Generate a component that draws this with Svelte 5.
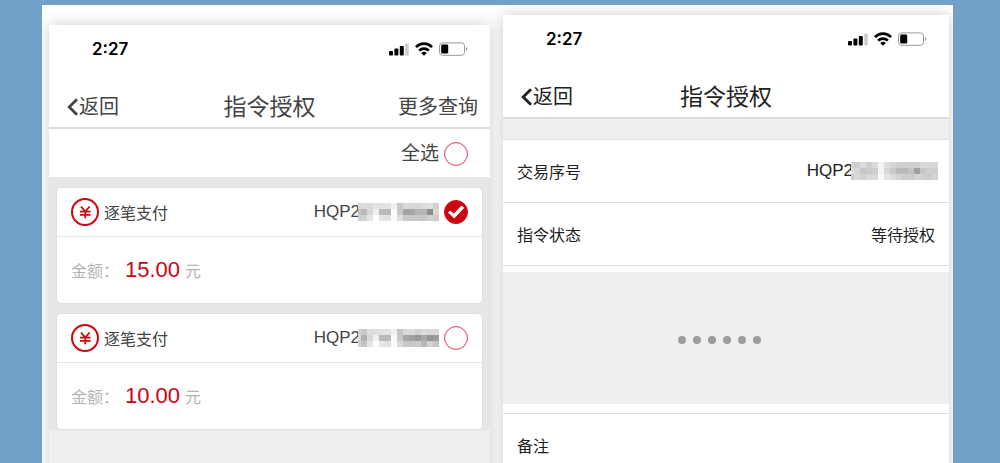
<script lang="ts">
	/** A payment waiting for authorisation */
	interface Payment {
		id: number;
		type: string;
		prefix: string;
		amount: string;
		checked: boolean;
		mask: string[];
	}

	/** Masks are rows of hex grey levels, one pair for each cell */
	let payments: Payment[] = $state([
		{
			id: 1,
			type: '逐笔支付',
			prefix: 'HQP2',
			amount: '15.00',
			checked: true,
			mask: [
				'd6dcd9e2e0e2f0c9d8d8d5dce0d0',
				'c5b8d8f0b9b9fcc8a3a5b5b58cd8',
				'ccd0e5ffe5e0fbddc8c8c8c5d0cc'
			]
		},
		{
			id: 2,
			type: '逐笔支付',
			prefix: 'HQP2',
			amount: '10.00',
			checked: false,
			mask: [
				'd0c8dcdee0e4f0c4dadad0dcd8d8',
				'd8b0d8efbabafbc8a8a299a8969b',
				'd2c5e6ffe6e2fcdacac6ccb8d0c6'
			]
		}
	]);

	const detailMask = [
		'd4cddbcfd9f3dfd6cecfcfcfd9d9d8',
		'ded6c7cbcdf3d8cab9b9c2a0c6cdcd',
		'cbd8cfd9d9f8e4dcd2cbccd4d0cbd4'
	];

	let allChecked = $derived(payments.every((p) => p.checked));

	/** Ticks or clears every payment in the list */
	function toggleAll() {
		const next = !allChecked;
		payments.forEach((p) => (p.checked = next));
	}

	/** Splits a mask row into its grey levels */
	function cells(row: string) {
		return row.match(/../g) ?? [];
	}
</script>

{#snippet statusBar()}
	<div class="status">
		<span class="time">2:27</span>
		<svg width="80" height="14" viewBox="0 0 80 14" aria-hidden="true">
			<rect x="1" y="9" width="4" height="4.500" rx="1" />
			<rect x="6.400" y="6.500" width="4" height="7" rx="1" />
			<rect x="11.800" y="4" width="4" height="9.500" rx="1" />
			<rect x="17.200" y="1.500" width="3.600" height="12" rx="1" fill="#ccc" />
			<g fill="none" stroke="#000" stroke-width="2.700">
				<path d="M28 5.100a11 11 0 0 1 16 0" />
				<path d="M31.100 8.600a7 7 0 0 1 9.800 0" />
			</g>
			<path d="M33.200 11a4 4 0 0 1 5.600 0L36 13.800z" />
			<rect x="51.500" y="0.900" width="25" height="12.400" rx="3" fill="none" stroke="#999" />
			<rect x="53.200" y="2.600" width="7" height="9" rx="1.400" />
			<path d="M77.800 5v4q1.600-.5 1.600-2t-1.600-2z" fill="#999" />
		</svg>
	</div>
{/snippet}

{#snippet backButton()}
	<button class="back">
		<svg width="12" height="18" viewBox="0 0 12 18" aria-hidden="true">
			<path d="M10 1.200L2.200 9l7.800 7.800" fill="none" stroke="currentColor" stroke-width="2.800" />
		</svg>返回
	</button>
{/snippet}

{#snippet mosaic(rows: string[])}
	<svg class="mosaic" width={cells(rows[0]).length * 6 - 3} height="18" shape-rendering="crispEdges" aria-hidden="true">
		{#each rows as row, y}
			{#each cells(row) as level, x}
				<rect x={x * 6 - 3} y={y * 6} width="6" height="6" fill={`#${level}${level}${level}`} />
			{/each}
		{/each}
	</svg>
{/snippet}

<main>
	<section class="phone list-phone">
		{@render statusBar()}
		<header>
			{@render backButton()}
			<h1>指令授权</h1>
			<button class="more">更多查询</button>
		</header>
		<label class="select-all">
			全选
			<input type="checkbox" checked={allChecked} onchange={toggleAll} />
		</label>
		<ul>
			{#each payments as payment (payment.id)}
				<li>
					<div class="card-head">
						<svg width="28" height="28" viewBox="0 0 28 28" aria-hidden="true">
							<g fill="none" stroke="#d0060f">
								<circle cx="14" cy="14" r="13" stroke-width="2" />
								<path d="M10 8.500l4.300 5 4.300-5M14.300 13.500v6.700M9 13.700h10.600M9 16.900h10.600" stroke-width="1.800" />
							</g>
						</svg>
						<span class="type">{payment.type}</span>
						<label>
							<span>{payment.prefix}</span>
							{@render mosaic(payment.mask)}
							<input type="checkbox" bind:checked={payment.checked} />
						</label>
					</div>
					<p>金额： <strong>{payment.amount}</strong> 元</p>
				</li>
			{/each}
		</ul>
	</section>

	<section class="phone detail-phone">
		{@render statusBar()}
		<header>
			{@render backButton()}
			<h1>指令授权</h1>
		</header>
		<div class="band"></div>
		<dl>
			<div>
				<dt>交易序号</dt>
				<dd class="serial">HQP2{@render mosaic(detailMask)}</dd>
			</div>
			<div>
				<dt>指令状态</dt>
				<dd>等待授权</dd>
			</div>
		</dl>
		<div class="omitted">
			{#each Array(6) as _}
				<i></i>
			{/each}
		</div>
		<dl class="remark">
			<div>
				<dt>备注</dt>
				<dd></dd>
			</div>
		</dl>
	</section>
</main>

<style>
	:global(body) {
		margin: 0;
		background: #71a0c8;
	}
	main {
		box-sizing: border-box;
		display: grid;
		grid-template-columns: 441fr 446fr;
		gap: 13px;
		height: 100vh;
		padding: 0 4px 0 7px;
		border: solid #71a0c8;
		border-width: 5px 47px 0 42px;
		background: #fff;
		overflow: hidden;
		font-family: 'Liberation Sans', 'Noto Sans CJK SC', sans-serif;
		font-size: 16px;
		color: #444;
	}
	.phone {
		background: #fff;
		box-shadow: 0 0 14px rgba(0, 0, 0, 0.2);
	}
	.list-phone {
		margin-top: 20px;
		background: #efefef;
	}
	.detail-phone {
		margin-top: 10px;
		color: #222;
	}
	.status {
		display: flex;
		align-items: center;
		justify-content: space-between;
		height: 48px;
		padding: 0 22px 0 43px;
		background: #fff;
	}
	.time {
		font: 600 17px Inter, sans-serif;
		color: #000;
	}
	header {
		display: grid;
		grid-template-columns: 1fr auto 1fr;
		align-items: center;
		height: 41px;
		padding: 13px 12px 0;
		border-bottom: 2px solid #dcdcde;
		background: #fff;
	}
	h1 {
		margin: 0;
		font-size: 23px;
		font-weight: 400;
		line-height: 32px;
	}
	button {
		padding: 0;
		border: 0;
		background: none;
		font: inherit;
		font-size: 20px;
		line-height: 28px;
		color: inherit;
		cursor: pointer;
	}
	.back {
		display: flex;
		align-items: center;
		justify-self: start;
		padding-left: 6px;
	}
	.more {
		justify-self: end;
	}
	.select-all {
		display: flex;
		align-items: center;
		justify-content: flex-end;
		gap: 5px;
		height: 46px;
		padding: 2px 22px 0;
		background: #fff;
		font-size: 19px;
		line-height: 24px;
	}
	input {
		display: grid;
		flex: none;
		box-sizing: border-box;
		width: 24px;
		height: 24px;
		margin: 0;
		border: 1px solid #dc4f68;
		border-radius: 50%;
		background: #fff;
		box-shadow: inset 0 0 1px #dc4f68;
		appearance: none;
	}
	input:checked {
		border-color: #cc0410;
		background: #cc0410;
	}
	input:checked::before {
		content: '';
		background: #fff;
		clip-path: polygon(13% 52%, 24% 43%, 40% 58%, 75% 20%, 88% 31%, 42% 80%);
	}
	ul {
		display: grid;
		gap: 11px;
		margin: 0;
		padding: 11px 8px 1px;
		background: #e7e7e7;
		list-style: none;
	}
	li {
		border-radius: 4px;
		background: #fff;
		box-shadow: 0 0 2px #ccc;
	}
	.card-head {
		display: flex;
		align-items: center;
		gap: 5px;
		height: 48px;
		padding: 0 14px;
		border-bottom: 1px solid #e8e8e8;
	}
	.type {
		flex: 1;
	}
	.card-head label {
		display: flex;
		align-items: center;
		font-size: 17px;
	}
	.card-head input {
		margin-left: 5px;
	}
	.mosaic {
		display: block;
		margin-left: -2px;
	}
	p {
		display: flex;
		align-items: center;
		height: 66px;
		margin: 0;
		padding: 0 14px;
		color: #b4b4b4;
	}
	strong {
		margin: 0 5px 0 6px;
		font-size: 22px;
		font-weight: 400;
		color: #cc0410;
	}
	.band {
		height: 20px;
		border-bottom: 1px solid #e0e0e0;
		background: #efefef;
	}
	dl {
		margin: 0;
	}
	dl div {
		display: flex;
		align-items: center;
		justify-content: space-between;
		height: 62px;
		padding: 0 14px;
		border-bottom: 1px solid #dedede;
	}
	dd {
		display: flex;
		align-items: center;
		margin: 0;
	}
	.serial {
		margin-right: -3px;
		font-size: 17px;
	}
	.omitted {
		display: flex;
		align-items: center;
		justify-content: center;
		gap: 7px;
		height: 132px;
		margin: 6px 0 9px;
		padding: 4px 14px 0 0;
		box-sizing: border-box;
		background: #efefef;
	}
	i {
		width: 8px;
		height: 8px;
		border-radius: 50%;
		background: #9c9c9c;
	}
	.remark {
		border-top: 1px solid #dedede;
	}
</style>
